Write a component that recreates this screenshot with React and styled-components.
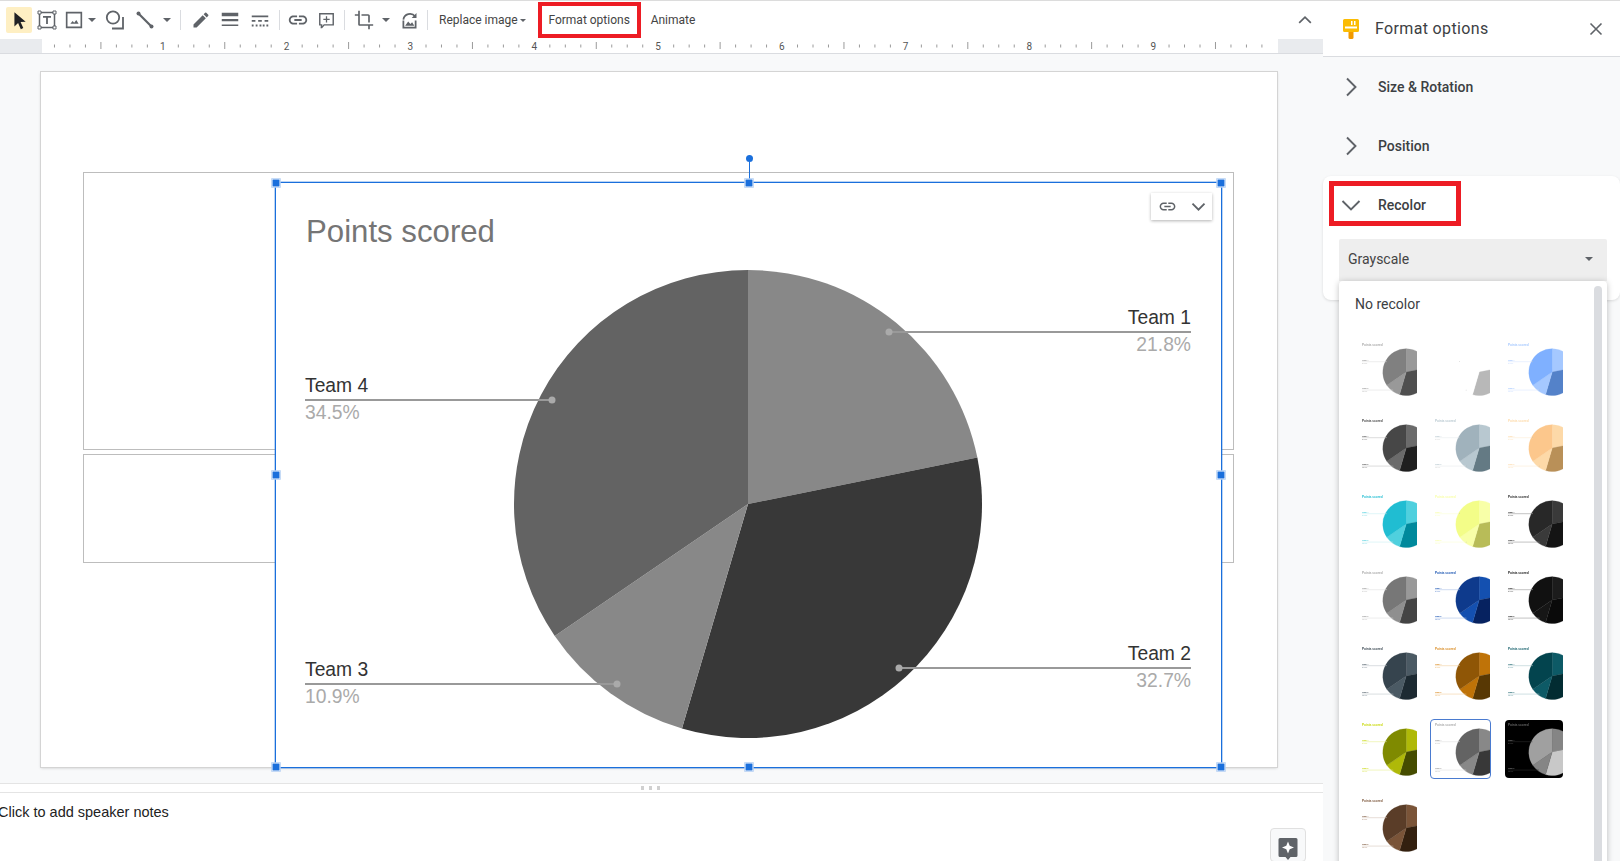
import React from 'react'
import styled, { createGlobalStyle } from 'styled-components'

const GlobalStyle = createGlobalStyle`
  html, body {
    margin: 0;
    padding: 0;
    background: #fff;
    overflow: hidden;
  }
  * {
    box-sizing: border-box;
  }
`

const blue = '#1a6fdc'
const red = '#ed1c24'
const grey = '#5f6368'

const App_ = styled.div`
  display: flex;
  width: 1620px;
  height: 861px;
  overflow: hidden;
  font-family: Roboto, "Liberation Sans", sans-serif;
`

const Main = styled.div`
  display: flex;
  flex-direction: column;
  width: 1323px;
  height: 861px;
`

const Toolbar = styled.div`
  display: flex;
  align-items: center;
  height: 39px;
  flex: none;
  padding-left: 6px;
  border-top: 1px solid #dcdcdc;
  background: #fff;
`

const ToolButton = styled.div`
  display: flex;
  align-items: center;
  justify-content: center;
  flex: none;
  width: ${p => p.$w || 26}px;
  height: 26px;
  margin-left: ${p => p.$ml || 0}px;
  border-radius: 2px;
  background: ${p => (p.$active ? '#feefc3' : 'transparent')};
`

const Separator = styled.div`
  flex: none;
  width: 1px;
  height: 20px;
  margin-left: ${p => p.$ml}px;
  background: #dadce0;
`

const Caret = styled.span`
  display: inline-block;
  width: 0;
  height: 0;
  border-left: ${p => p.$size || 4}px solid transparent;
  border-right: ${p => p.$size || 4}px solid transparent;
  border-top: ${p => p.$size || 4}px solid ${grey};
`

const ToolText = styled.div`
  display: flex;
  align-items: center;
  gap: 2px;
  flex: none;
  margin-left: ${p => p.$ml}px;
  font-size: 12px;
  color: #444;
  white-space: nowrap;
`

const FormatBox = styled.div`
  display: flex;
  align-items: center;
  justify-content: center;
  flex: none;
  width: 103px;
  height: 36px;
  margin-left: 12px;
  border: 4px solid ${red};
  font-size: 12px;
  color: #444;
`

const CollapseButton = styled.div`
  display: flex;
  margin-left: auto;
  margin-right: 8px;
`

const RulerBar = styled.div`
  flex: none;
  height: 15px;
  padding-left: 42px;
  background: #e9ebee;
  border-bottom: 1px solid #dadce0;
`

const RulerSvg = styled.svg`
  display: block;
  background: #fff;
`

const Canvas = styled.div`
  flex: none;
  height: 729px;
  padding: 18px 0 0 41px;
  background: #f8f9fa;
`

const Slide = styled.div`
  position: relative;
  width: 1236px;
  height: 695px;
  background: #fff;
  box-shadow: 0 0 0 1px #d4d4d4, 0 1px 3px rgba(0, 0, 0, 0.2);
`

const Placeholder = styled.div`
  position: absolute;
  left: 42px;
  top: ${p => p.$top}px;
  width: 1151px;
  height: ${p => p.$h}px;
  border: 1px solid #bdbdbd;
`

const ChartFrame = styled.div`
  position: absolute;
  left: 235px;
  top: 111px;
  width: 945px;
  height: 584px;
  background: #fff;
  outline: 1px solid ${blue};
  box-shadow: 0 0 0 2px rgba(26, 111, 220, 0.3);
`

const Handle = styled.div`
  position: absolute;
  left: ${p => p.$x}%;
  top: ${p => p.$y}%;
  width: 9px;
  height: 9px;
  transform: translate(-50%, -50%);
  background: ${blue};
  border: 1px solid #fff;
`

const RotateStem = styled.div`
  position: absolute;
  left: 50%;
  top: -21px;
  width: 1px;
  height: 21px;
  background: ${blue};
`

const RotateDot = styled.div`
  position: absolute;
  left: 50%;
  top: -28px;
  width: 7px;
  height: 7px;
  margin-left: -3px;
  border-radius: 50%;
  background: ${blue};
`

const LinkChip = styled.div`
  position: absolute;
  top: 10px;
  right: 9px;
  display: flex;
  align-items: center;
  justify-content: space-between;
  width: 61px;
  height: 27px;
  padding: 0 5px 0 7px;
  background: #fff;
  box-shadow: 0 1px 3px rgba(0, 0, 0, 0.3);
`

const DragStrip = styled.div`
  display: flex;
  align-items: center;
  gap: 5px;
  flex: none;
  height: 10px;
  padding-left: 641px;
  background: #fff;
  border-top: 1px solid #e4e4e4;
  border-bottom: 1px solid #e4e4e4;
`

const DragDot = styled.span`
  width: 3px;
  height: 4px;
  background: #d0d0d0;
`

const Notes = styled.div`
  position: relative;
  flex: 1;
  padding-top: 11px;
  background: #fff;
`

const NotesText = styled.div`
  margin-left: -2px;
  font-family: "Liberation Sans", Arial, sans-serif;
  font-size: 14.5px;
  line-height: 16px;
  color: #222;
`

const InsightButton = styled.div`
  position: absolute;
  right: 17px;
  bottom: -1px;
  display: flex;
  justify-content: center;
  padding-top: 8px;
  width: 36px;
  height: 34px;
  background: #f8f9fa;
  border: 1px solid #e0e0e0;
  border-radius: 4px;
`

const Panel = styled.div`
  display: flex;
  flex-direction: column;
  width: 297px;
  height: 861px;
  background: #f8f9fa;
`

const PanelHeader = styled.div`
  display: flex;
  align-items: center;
  flex: none;
  height: 57px;
  padding: 0 16px 0 19px;
  border-top: 1px solid #dcdcdc;
  border-bottom: 1px solid #dadce0;
  background: #fff;
`

const PanelTitle = styled.div`
  margin-left: 15px;
  font-size: 16px;
  font-weight: 400;
  letter-spacing: 0.35px;
  color: #3c4043;
`

const CloseButton = styled.div`
  display: flex;
  margin-left: auto;
`

const Section = styled.div`
  display: flex;
  align-items: center;
  height: ${p => p.$h || 59}px;
  flex: none;
  padding-left: 16px;
`

const SectionLabel = styled.div`
  margin-left: 15px;
  font-size: 14px;
  font-weight: 500;
  color: #3c4043;
`

const RecolorCard = styled.div`
  position: relative;
  flex: none;
  height: 124px;
  margin-top: 1px;
  background: #fff;
  border-radius: 8px;
  box-shadow: 0 1px 3px rgba(0, 0, 0, 0.12);
`

const RedFrame = styled.div`
  position: absolute;
  left: 6px;
  top: 5px;
  width: 132px;
  height: 45px;
  border: 5px solid ${red};
`

const SelectWrap = styled.div`
  position: relative;
  margin: 5px 13px 0 16px;
`

const Select = styled.div`
  display: flex;
  align-items: center;
  justify-content: space-between;
  height: 42px;
  padding: 0 14px 2px 9px;
  background: #eee;
  border-radius: 2px 2px 0 0;
  font-size: 14px;
  color: #444;
`

const Dropdown = styled.div`
  position: absolute;
  left: 0;
  right: 0;
  top: 42px;
  height: 600px;
  padding-left: 20px;
  background: #fff;
  border-radius: 4px;
  box-shadow: 0 1px 6px rgba(0, 0, 0, 0.25);
`

const Scrollbar = styled.div`
  position: absolute;
  top: 5px;
  right: 5px;
  bottom: 0;
  width: 8px;
  background: #dadce0;
  border-radius: 4px;
`

const NoRecolor = styled.div`
  height: 59px;
  padding-top: 15px;
  margin-left: -4px;
  font-size: 14px;
  line-height: 16px;
  color: #3c4043;
`

const ThumbGrid = styled.div`
  display: grid;
  grid-template-columns: repeat(3, 58px);
  grid-auto-rows: 58px;
  column-gap: 15px;
  row-gap: 18px;
`

const Thumb = styled.div`
  position: relative;
  width: 58px;
  height: 58px;
  overflow: hidden;
  background: ${p => p.$bg};
  border-radius: ${p => (p.$bg === '#000' ? 4 : 0)}px;
  svg {
    filter: blur(0.45px);
  }
`

const ThumbCell = styled.div`
  position: relative;
  width: 58px;
  height: 58px;
`

const SelectedOutline = styled.div`
  position: absolute;
  inset: -1px -1px -1px -2px;
  border: 1px solid #4a7bd0;
  border-radius: 4px;
`

const ChartSvg = styled.svg`
  display: block;
`

/* chart drawing, the thumbnails are the same picture at a tenth of the size */
const SHARES = [21.8, 32.7, 10.9, 34.5]
const CX = 472
const CY = 321
const R = 234

const slicePaths = () => {
  let start = 0
  return SHARES.map(share => {
    const end = start + (share / 99.9) * Math.PI * 2
    const x1 = CX + R * Math.sin(start)
    const y1 = CY - R * Math.cos(start)
    const x2 = CX + R * Math.sin(end)
    const y2 = CY - R * Math.cos(end)
    const large = end - start > Math.PI ? 1 : 0
    start = end
    return `M${CX} ${CY}L${x1} ${y1}A${R} ${R} 0 ${large} 1 ${x2} ${y2}Z`
  })
}

const LEGEND = [
  { name: 'Team 1', pct: '21.8%', lineY: 149, dot: 613, right: true },
  { name: 'Team 2', pct: '32.7%', lineY: 485, dot: 623, right: true },
  { name: 'Team 3', pct: '10.9%', lineY: 501, dot: 341 },
  { name: 'Team 4', pct: '34.5%', lineY: 217, dot: 276 },
]

const PieChart = ({ width, colors, title = '#757575', label = '#333', pct = '#aaa', line = '#999' }) => {
  const small = width < 100
  return (
    <ChartSvg
      width={width}
      height={width * 0.618}
      viewBox="0 0 945 584"
      fontFamily='"Liberation Sans", Arial, sans-serif'
      fontWeight={small ? 700 : 400}
    >
      <text x="30" y="59" fontSize="31.2" fill={title}>Points scored</text>
      {slicePaths().map((d, i) => (
        <path key={i} d={d} fill={colors[i]} stroke={small ? colors[i] : 'none'} strokeWidth="3" />
      ))}
      {LEGEND.map(l => {
        const textX = l.right ? 915 : 29
        const anchor = l.right ? 'end' : 'start'
        return (
          <g key={l.name}>
            <line x1={l.right ? l.dot : 29} x2={l.right ? 915 : l.dot} y1={l.lineY} y2={l.lineY} stroke={line} strokeWidth={small ? 5 : 2} />
            <circle cx={l.dot} cy={l.lineY} r="3.5" fill="#aaa" />
            <text x={textX} y={l.lineY - 8} fontSize="19.3" textAnchor={anchor} fill={label}>{l.name}</text>
            <text x={textX} y={l.lineY + 19} fontSize="19.3" textAnchor={anchor} fill={pct}>{l.pct}</text>
          </g>
        )
      })}
    </ChartSvg>
  )
}

const THUMBS = [
  { colors: ['#999', '#4f4f4f', '#999', '#808080'], title: '#aaa', label: '#999', pct: '#ccc', line: '#ddd' },
  { colors: ['#fff', '#b8b8b8', '#fff', '#fff'], title: '#fff', label: '#fff', pct: '#fff', line: '#fff' },
  { colors: ['#a5c8ff', '#5482c9', '#a5c8ff', '#7fb0ff'], title: '#a5c8ff', label: '#a5c8ff', pct: '#d5e4ff', line: '#d5e4ff' },
  { colors: ['#6b6b6b', '#1f1f1f', '#6b6b6b', '#474747'], title: '#444', label: '#555', pct: '#999', line: '#bbb' },
  { colors: ['#b8c8d0', '#647a84', '#b8c8d0', '#a0b2bc'], title: '#b8c8d0', label: '#b8c8d0', pct: '#ddd', line: '#e4e8ea' },
  { colors: ['#fdd9a8', '#b99058', '#fdd9a8', '#fcc78c'], title: '#fdd9a8', label: '#fdd9a8', pct: '#fde8cc', line: '#fde8cc' },
  { colors: ['#4fd0de', '#00899c', '#4fd0de', '#20bdd2'], title: '#20bdd2', label: '#4fd0de', pct: '#a8e4ec', line: '#c0ecf2' },
  { colors: ['#f8ffa8', '#b8bc58', '#f8ffa8', '#f3fd88'], title: '#f8ffa8', label: '#f8ffa8', pct: '#fbffd0', line: '#fbffd0' },
  { colors: ['#3a3a3a', '#141414', '#3a3a3a', '#282828'], title: '#222', label: '#222', pct: '#777', line: '#888' },
  { colors: ['#999', '#444', '#8f8f8f', '#777'], title: '#aaa', label: '#999', pct: '#ccc', line: '#ddd' },
  { colors: ['#1450b0', '#062260', '#1450b0', '#0e3a8c'], title: '#1450b0', label: '#1450b0', pct: '#7fa0d8', line: '#9db8e4' },
  { colors: ['#1c1c1c', '#0a0a0a', '#161616', '#111'], title: '#111', label: '#111', pct: '#777', line: '#888' },
  { colors: ['#4b5a64', '#1d2a32', '#4b5a64', '#36444e'], title: '#36444e', label: '#4b5a64', pct: '#9aa4ac', line: '#b4bcc2' },
  { colors: ['#bf7308', '#583804', '#bf7308', '#8f5606'], title: '#d98a20', label: '#d98a20', pct: '#f0c890', line: '#f0c890' },
  { colors: ['#0d5a66', '#022c32', '#0d5a66', '#03444e'], title: '#0d5a66', label: '#0d5a66', pct: '#8ab0b6', line: '#a0c0c6' },
  { colors: ['#afb908', '#454c00', '#afb908', '#7f8a00'], title: '#c8d808', label: '#c8d808', pct: '#e4ec80', line: '#e4ec80' },
  { colors: ['#888', '#383838', '#888', '#636363'], title: '#aaa', label: '#999', pct: '#ccc', line: '#ddd', selected: true },
  { bg: '#000', colors: ['#858585', '#c8c8c8', '#858585', '#a0a0a0'], title: '#666', label: '#777', pct: '#444', line: '#333' },
  { colors: ['#7a5438', '#33200f', '#7a5438', '#5a3d28'], title: '#7a5438', label: '#7a5438', pct: '#c0a898', line: '#d0bcb0' },
]

/* icons */
const Ico = ({ size = 22, children, fill = grey }) => (
  <svg width={size} height={size} viewBox="0 0 24 24" fill={fill}>{children}</svg>
)

const CursorIcon = () => (
  <Ico fill="#202124"><path d="M7 3.5v15.6l4-3.7 3 6.6 2.7-1.2-3-6.5 5.6-.3z" /></Ico>
)
const TextBoxIcon = () => (
  <Ico size={24}>
    <path d="M4.5 4.5h15v15h-15z" fill="none" stroke={grey} strokeWidth="1.5" />
    <path d="M3 3h3v3H3zM18 3h3v3h-3zM3 18h3v3H3zM18 18h3v3h-3z" fill="#fff" stroke={grey} strokeWidth="1" />
    <path d="M8 8h8v1.8h-3.1V16h-1.8V9.8H8z" />
  </Ico>
)
const ImageIcon = () => (
  <Ico>
    <path d="M4 4h16v16H4z" fill="none" stroke={grey} strokeWidth="1.8" />
    <path d="M8 16l2.5-3 1.7 2 2.3-3 2.5 4z" />
  </Ico>
)
const ShapeIcon = () => (
  <Ico size={24}>
    <circle cx="10" cy="9.5" r="6.2" fill="none" stroke={grey} strokeWidth="1.8" />
    <path d="M20 9v11.5H9" fill="none" stroke={grey} strokeWidth="1.8" />
  </Ico>
)
const LineIcon = () => (
  <Ico size={24}>
    <path d="M6 6l12 12" stroke={grey} strokeWidth="2.2" />
    <circle cx="5.5" cy="5.5" r="2" />
    <circle cx="18.5" cy="18.5" r="2" />
  </Ico>
)
const PenIcon = () => (
  <Ico size={20}>
    <path d="M3 17.25V21h3.75L17.81 9.94l-3.75-3.75L3 17.25zM20.71 7.04c.39-.39.39-1.02 0-1.41l-2.34-2.34a1 1 0 00-1.41 0l-1.83 1.83 3.75 3.75 1.83-1.83z" />
  </Ico>
)
const WeightIcon = () => (
  <Ico>
    <path d="M3 4h18v4H3zM3 11h18v2.4H3zM3 17h18v1.6H3z" />
  </Ico>
)
const DashIcon = () => (
  <Ico>
    <path d="M3 7h18v2H3zM3 12h4v2H3zM10 12h4v2h-4zM17 12h4v2h-4zM3 17h2v2H3zM7.3 17h2v2h-2zM11.5 17h2v2h-2zM15 17h2v2h-2zM19 17h2v2h-2z" />
  </Ico>
)
const LINK_PATH = 'M3.9 12c0-1.71 1.39-3.1 3.1-3.1h4V7H7c-2.76 0-5 2.24-5 5s2.24 5 5 5h4v-1.9H7c-1.71 0-3.1-1.39-3.1-3.1zM8 13h8v-2H8v2zm9-6h-4v1.9h4c1.71 0 3.1 1.39 3.1 3.1s-1.39 3.1-3.1 3.1h-4V17h4c2.76 0 5-2.24 5-5s-2.24-5-5-5z'
const LinkIcon = ({ size = 22 }) => (
  <Ico size={size}><path d={LINK_PATH} /></Ico>
)
const CommentIcon = () => (
  <Ico size={19}>
    <path d="M3.5 3.5h17v14H9l-3 3.5h-.5l.3-3.5H3.5z" fill="none" stroke={grey} strokeWidth="1.8" />
    <path d="M11.2 6.5h1.6v3.2H16v1.6h-3.2v3.2h-1.6v-3.2H8V9.7h3.2z" />
  </Ico>
)
const CropIcon = () => (
  <Ico size={20}>
    <path d="M17 15h2V7c0-1.1-.9-2-2-2H9v2h8v8zM7 17V1H5v4H1v2h4v10c0 1.1.9 2 2 2h10v4h2v-4h4v-2H7z" />
  </Ico>
)
const ResetIcon = () => (
  <Ico size={21}>
    <path d="M5 11a7.5 7.5 0 0113.5-3.5" fill="none" stroke={grey} strokeWidth="2" />
    <path d="M14.5 9H20V3.5z" />
    <path d="M4 12h2v7h12v-7h2v9H4z" />
    <path d="M7 18l3.5-5 2.5 3 2-2 2.5 4z" />
  </Ico>
)
const Chevron = ({ dir = 'right', size = 24, color = grey, width = 1.9 }) => {
  const d = {
    right: 'M8 3.5L16.5 12 8 20.5',
    down: 'M3.5 8l8.5 8.5L20.5 8',
    up: 'M5 15.5l7-7 7 7',
  }[dir]
  return (
    <svg width={size} height={size} viewBox="0 0 24 24" fill="none" stroke={color} strokeWidth={width}>
      <path d={d} />
    </svg>
  )
}
const CloseIcon = () => (
  <svg width="16" height="16" viewBox="0 0 16 16" fill="none" stroke={grey} strokeWidth="1.6">
    <path d="M2.5 2.5l11 11M13.5 2.5l-11 11" />
  </svg>
)
const RollerIcon = () => (
  <svg width="18" height="20" viewBox="0 0 18 20">
    <path d="M1 1.5A1.5 1.5 0 012.5 0h13A1.5 1.5 0 0117 1.5v10a1.5 1.5 0 01-1.5 1.5h-13A1.5 1.5 0 011 11.5z" fill="#fbbc04" />
    <path d="M3 7.5h12v2H3zM9 2h1.5v4H9zM12 2h1.5v4H12z" fill="#fff" />
    <path d="M6.5 13h5v5.5a1.5 1.5 0 01-1.5 1.5H8a1.5 1.5 0 01-1.5-1.5z" fill="#f29900" />
  </svg>
)
const InsightIcon = () => (
  <svg width="20" height="23" viewBox="0 0 20 23">
    <path d="M2 1h16a1.5 1.5 0 011.5 1.5v16A1.5 1.5 0 0118 20h-5.5L10 23l-2.5-3H2A1.5 1.5 0 01.5 18.5v-16A1.5 1.5 0 012 1z" fill="#5f6368" />
    <path d="M10 4.5l1.7 4.3 4.3 1.7-4.3 1.7L10 16.5l-1.7-4.3L4 10.5l4.3-1.7z" fill="#fff" />
  </svg>
)

const Ruler = () => {
  const ticks = []
  for (let k = 1; k < 80; k++) {
    const x = -3 + 15.48 * k
    if (k % 8 === 0) continue
    const tall = k % 4 === 0
    ticks.push(<line key={k} x1={x} x2={x} y1={tall ? 3 : 5.5} y2={tall ? 10 : 8.5} stroke="#9a9a9a" strokeWidth="1" />)
  }
  return (
    <RulerSvg width="1236" height="14" viewBox="0 0 1236 14">
      {ticks}
      {[1, 2, 3, 4, 5, 6, 7, 8, 9].map(n => (
        <text key={n} x={-3 + 123.8 * n} y="10.5" fontSize="10" fontFamily="Roboto, sans-serif" textAnchor="middle" fill="#555">{n}</text>
      ))}
    </RulerSvg>
  )
}

const HANDLES = [[0, 0], [50, 0], [100, 0], [0, 50], [100, 50], [0, 100], [50, 100], [100, 100]]

export default function App() {
  return (
    <App_>
      <GlobalStyle />
      <Main>
        <Toolbar>
          <ToolButton $active><CursorIcon /></ToolButton>
          <ToolButton $ml={2}><TextBoxIcon /></ToolButton>
          <ToolButton $ml={1}><ImageIcon /></ToolButton>
          <ToolButton $w={10}><Caret /></ToolButton>
          <ToolButton $ml={5}><ShapeIcon /></ToolButton>
          <ToolButton $ml={4}><LineIcon /></ToolButton>
          <ToolButton $w={10} $ml={4}><Caret /></ToolButton>
          <Separator $ml={8} />
          <ToolButton $ml={7}><PenIcon /></ToolButton>
          <ToolButton $ml={3}><WeightIcon /></ToolButton>
          <ToolButton $ml={4}><DashIcon /></ToolButton>
          <Separator $ml={6} />
          <ToolButton $ml={5}><LinkIcon /></ToolButton>
          <ToolButton $ml={2}><CommentIcon /></ToolButton>
          <Separator $ml={5} />
          <ToolButton $ml={6}><CropIcon /></ToolButton>
          <ToolButton $w={10} $ml={4}><Caret /></ToolButton>
          <ToolButton $ml={5}><ResetIcon /></ToolButton>
          <Separator $ml={5} />
          <ToolText $ml={11}>Replace image<Caret $size={3} /></ToolText>
          <FormatBox>Format options</FormatBox>
          <ToolText $ml={10}>Animate</ToolText>
          <CollapseButton><Chevron dir="up" size={20} width={2} /></CollapseButton>
        </Toolbar>
        <RulerBar><Ruler /></RulerBar>
        <Canvas>
          <Slide>
            <Placeholder $top={100} $h={278} />
            <Placeholder $top={382} $h={109} />
            <ChartFrame>
              <PieChart width={945} colors={['#888', '#383838', '#888', '#636363']} />
              <RotateStem />
              <RotateDot />
              {HANDLES.map(([x, y]) => (
                <Handle key={`${x}-${y}`} $x={x} $y={y} />
              ))}
              <LinkChip>
                <LinkIcon size={19} />
                <Chevron dir="down" size={17} width={2.6} />
              </LinkChip>
            </ChartFrame>
          </Slide>
        </Canvas>
        <DragStrip>
          <DragDot />
          <DragDot />
          <DragDot />
        </DragStrip>
        <Notes>
          <NotesText>Click to add speaker notes</NotesText>
          <InsightButton><InsightIcon /></InsightButton>
        </Notes>
      </Main>
      <Panel>
        <PanelHeader>
          <RollerIcon />
          <PanelTitle>Format options</PanelTitle>
          <CloseButton><CloseIcon /></CloseButton>
        </PanelHeader>
        <Section>
          <Chevron />
          <SectionLabel>Size &amp; Rotation</SectionLabel>
        </Section>
        <Section>
          <Chevron />
          <SectionLabel>Position</SectionLabel>
        </Section>
        <RecolorCard>
          <Section $h={58}>
            <Chevron dir="down" />
            <SectionLabel>Recolor</SectionLabel>
          </Section>
          <RedFrame />
          <SelectWrap>
            <Select>Grayscale<Caret /></Select>
            <Dropdown>
              <Scrollbar />
              <NoRecolor>No recolor</NoRecolor>
              <ThumbGrid>
                {THUMBS.map((t, i) => (
                  <ThumbCell key={i}>
                    <Thumb $bg={t.bg || '#fff'}>
                      <PieChart width={94.5} colors={t.colors} title={t.title} label={t.label} pct={t.pct} line={t.line} />
                    </Thumb>
                    {t.selected && <SelectedOutline />}
                  </ThumbCell>
                ))}
              </ThumbGrid>
            </Dropdown>
          </SelectWrap>
        </RecolorCard>
      </Panel>
    </App_>
  )
}
